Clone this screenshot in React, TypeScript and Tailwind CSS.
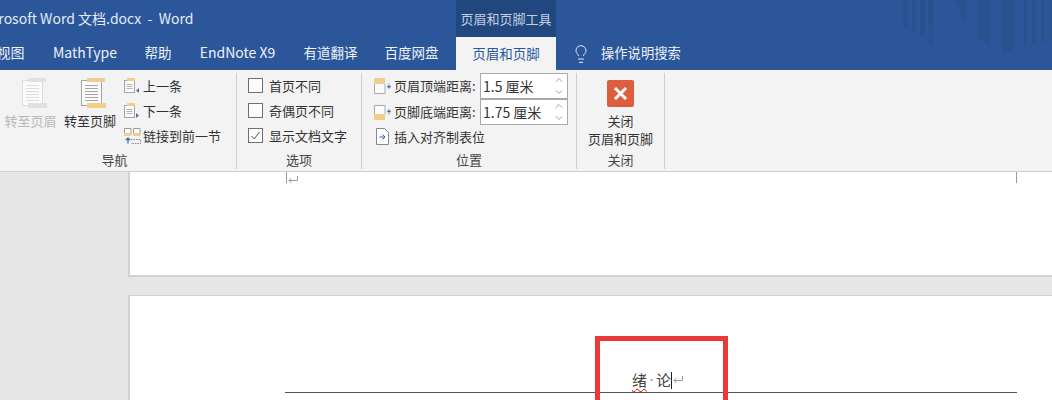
import { Lightbulb, ChevronUp, ChevronDown } from "lucide-react";

const font = "font-['Noto_Sans_CJK_SC','Noto_Sans',sans-serif]";

const tabs = [
  { label: "MathType", width: "w-[92px]", size: "text-[14px]" },
  { label: "帮助", width: "w-[54px]", size: "text-[13.500px]" },
  { label: "EndNote X9", width: "w-[105px]", size: "text-[14px]" },
  { label: "有道翻译", width: "w-[81px]", size: "text-[13.500px]" },
  { label: "百度网盘", width: "w-[81px]", size: "text-[13.500px]" },
];

function PageIcon({ faded }: { faded?: boolean }) {
  const line = faded ? "#dcdcdc" : "#a5a5a5";
  const accent = faded ? "#e0e0e0" : "#f0cf8c";
  return (
    <svg width="26" height="31" viewBox="0 0 26 31" className="shrink-0">
      <rect x="0.500" y="2.500" width="20" height="25" fill="#fbfbfb" stroke={line} />
      {[7, 10, 13, 16, 19, 22].map((y) => (
        <path key={y} d={`M4 ${y + 0.5}h13`} stroke={line} />
      ))}
      <path d="M6 0h18v4H6z" fill={accent} />
      <path d="M6 25h19v5H6z" fill={accent} />
    </svg>
  );
}

function SmallPage({ dir }: { dir: "up" | "down" }) {
  return (
    <svg width="16" height="17" viewBox="0 0 16 17" className="shrink-0">
      <rect x="0.500" y="3.500" width="10" height="12" fill="#fbfbfb" stroke="#a5a5a5" />
      <path d="M2.500 7.500h6M2.500 9.500h6M2.500 11.500h6" stroke="#b5b5b5" />
      <path d="M3 1h8v3H3z" fill="#f0cf8c" />
      {dir === "up" ? <path d="M15 11v5l-3-2.500z" fill="#4a74a8" /> : <path d="M12 11v5l3-2.500z" fill="#4a74a8" />}
    </svg>
  );
}

function LinkIcon() {
  return (
    <svg width="17" height="16" viewBox="0 0 17 16" className="shrink-0">
      <path d="M.500 6V.500h6.500V6M9.500 6V.500H16V6" fill="#fbfbfb" stroke="#999" />
      <path d="M0 5h7.500v3H0zM9 5h7.500v3H9z" fill="#f0cf8c" />
      <path d="M7 11.500h9.500v4H7" fill="none" stroke="#888" strokeDasharray="1.500 1" />
      <path d="M4 10v5.500M1.800 12.200 4 10l2.200 2.200" fill="none" stroke="#2f5f9e" strokeWidth="1.200" />
    </svg>
  );
}

function MarginIcon({ bar }: { bar: "top" | "bottom" }) {
  return (
    <svg width="17" height="17" viewBox="0 0 17 17" className="shrink-0">
      {bar === "top" ? (
        <>
          <path d="M0 0h11v6H0z" fill="#f0cf8c" />
          <path d="M.500 6v9.500h10.500V6" fill="#fbfbfb" stroke="#aaa" />
          <path d="M15 5v3M13 8h4l-2 2.500z" fill="#4a74a8" stroke="#4a74a8" strokeWidth="0.500" />
        </>
      ) : (
        <>
          <path d="M.500 10V1.500h10.500V10" fill="#fbfbfb" stroke="#aaa" />
          <path d="M0 10h11v6H0z" fill="#f0cf8c" />
          <path d="M15 11V8M13 8h4l-2-2.500z" fill="#4a74a8" stroke="#4a74a8" strokeWidth="0.500" />
        </>
      )}
    </svg>
  );
}

function ReturnMark() {
  return (
    <svg width="10" height="10" viewBox="0 0 10 10" className="shrink-0">
      <path d="M9.500 1v4.500H1M3.500 3 1 5.500 3.500 8" fill="none" stroke="#999" />
    </svg>
  );
}

function Check({ label, checked }: { label: string; checked?: boolean }) {
  return (
    <div className="flex h-[25px] items-center gap-[6px]">
      <span className="flex h-[15px] w-[15px] items-center justify-center border border-[#6f6f6f] bg-[#fbfbfb]">
        {checked && (
          <svg width="11" height="11" viewBox="0 0 11 11">
            <path d="M1.500 6 4.300 9 9.500 1.800" fill="none" stroke="#555" />
          </svg>
        )}
      </span>
      <span>{label}</span>
    </div>
  );
}

function Spin({ value }: { value: string }) {
  return (
    <div className="flex h-[26px] w-[88px] items-center justify-between border border-[#a9a9a9] bg-white px-[2px] text-[14px] text-[#333]">
      <span>{value}</span>
      <span className="flex flex-col text-[#666]">
        <ChevronUp size={12} strokeWidth={1.200} />
        <ChevronDown size={12} strokeWidth={1.200} />
      </span>
    </div>
  );
}

function Group({ label, className, labelClass = "", children }: { label: string; className: string; labelClass?: string; children: React.ReactNode }) {
  return (
    <div className={`flex h-[96px] shrink-0 flex-col border-r border-[#cfcfcf] ${className}`}>
      <div className="flex-1">{children}</div>
      <div className={`text-center text-[13px] leading-[18px] text-[#444] ${labelClass}`}>{label}</div>
    </div>
  );
}

export default function App() {
  return (
    <div className={`relative h-[400px] w-[1052px] overflow-hidden bg-[#e6e6e6] ${font}`}>
      {/* title bar + tabs */}
      <div className="relative h-[70px] overflow-hidden bg-[#2b579a]">
        <div className="flex h-[37px] items-start">
          <div className="-ml-[24px] w-[480px] pt-[7px] text-[14px] leading-[22px] whitespace-pre text-[#e4ebf5]">
            Microsoft Word 文档.docx  -  Word
          </div>
          <div className="flex h-[37px] w-[100px] items-center justify-center bg-[#21477f] text-[13px] text-[#c3cfe2]">
            页眉和页脚工具
          </div>
        </div>
        <div className="flex h-[33px] items-center text-[#eef2f8]">
          <div className="-ml-[18px] w-[57px] shrink-0 pb-[2px] text-center text-[14px]">视图</div>
          {tabs.map((tab) => (
            <div key={tab.label} className={`${tab.width} ${tab.size} shrink-0 pb-[2px] text-center`}>
              {tab.label}
            </div>
          ))}
          <div className="ml-[4px] flex h-full w-[100px] items-center justify-center bg-[#f3f3f3] pb-[1px] text-[13.500px] text-[#2b579a]">
            页眉和页脚
          </div>
          <Lightbulb size={20} strokeWidth={1.200} className="ml-[15px] text-[#e4ebf5]" />
          <span className="ml-[10px] pb-[1px] text-[13.300px]">操作说明搜索</span>
        </div>
        {/* background art in the title bar */}
        <svg width="150" height="56" viewBox="0 0 150 56" className="absolute top-0 left-[902px]">
          <g fill="#24497f" opacity="0.4">
            <path d="M1 0h5v28H1zM10 0h4v32H10zM18 0h5v36h-5zM26 0h5v44h-4z" />
            <path d="M53 0h11v24z" />
            <path d="M75 0h13v46l-13-8zM100 0h12v50l-12 2zM122 0h3v46h-3zM130 0h4v44h-4zM139 0h4v42h-4zM147 0h3v40h-3z" />
          </g>
        </svg>
      </div>

      {/* ribbon */}
      <div className="flex h-[102px] border-b border-[#cfcfcf] bg-[#f3f3f3] pt-[3px] text-[13px] leading-[18px] text-[#333]">
        <Group label="导航" className="w-[237px]" labelClass="pr-[7px]">
          <div className="flex">
            <div className="flex w-[61px] flex-col items-center pt-[5px] text-[#b8b8b8]">
              <div className="ml-[8px]"><PageIcon faded /></div>
              <span className="mt-[3px] whitespace-nowrap">转至页眉</span>
            </div>
            <div className="flex w-[58px] flex-col items-center pt-[5px]">
              <div className="ml-[8px]"><PageIcon /></div>
              <span className="mt-[3px] whitespace-nowrap">转至页脚</span>
            </div>
            <div className="ml-[5px] flex flex-col">
              <div className="flex h-[25px] items-center gap-[3px]"><SmallPage dir="up" /><span>上一条</span></div>
              <div className="flex h-[25px] items-center gap-[3px]"><SmallPage dir="down" /><span>下一条</span></div>
              <div className="flex h-[25px] items-center gap-[2px]"><LinkIcon /><span className="whitespace-nowrap">链接到前一节</span></div>
            </div>
          </div>
        </Group>
        <Group label="选项" className="w-[125px]">
          <div className="pl-[11px]">
            <Check label="首页不同" />
            <Check label="奇偶页不同" />
            <Check label="显示文档文字" checked />
          </div>
        </Group>
        <Group label="位置" className="w-[215px]">
          <div className="pl-[12px]">
            <div className="flex h-[26px] items-center gap-[3px]">
              <MarginIcon bar="top" />
              <span className="w-[83px] whitespace-nowrap">页眉顶端距离:</span>
              <Spin value="1.5 厘米" />
            </div>
            <div className="flex h-[26px] items-center gap-[3px]">
              <MarginIcon bar="bottom" />
              <span className="w-[83px] whitespace-nowrap">页脚底端距离:</span>
              <Spin value="1.75 厘米" />
            </div>
            <div className="flex h-[23px] items-center gap-[5px] pl-[2px]">
              <svg width="13" height="17" viewBox="0 0 13 17" className="shrink-0">
                <path d="M.500.500h8l4 4v12H.500z" fill="#fff" stroke="#888" />
                <path d="M3.500 9h5M6.500 6.500 9 9l-2.500 2.500" fill="none" stroke="#2f5f9e" />
              </svg>
              <span className="whitespace-nowrap">插入对齐制表位</span>
            </div>
          </div>
        </Group>
        <Group label="关闭" className="w-[88px]">
          <div className="flex flex-col items-center pt-[7px] leading-[18px]">
            <span className="flex h-[27px] w-[27px] items-center justify-center rounded-[2px] bg-[#dd5e3f]">
              <svg width="15" height="15" viewBox="0 0 15 15">
                <path d="M2 2l11 11M13 2 2 13" stroke="#fff" strokeWidth="3" />
              </svg>
            </span>
            <span className="mt-[5px]">关闭</span>
            <span>页眉和页脚</span>
          </div>
        </Group>
      </div>

      {/* document area */}
      <div className="ml-[128px] flex flex-col gap-[18px]">
        <div className="relative h-[105px] border-b-2 border-l-2 border-[#d2d2d2] bg-white">
          <span className="absolute top-0 left-[156px] h-[11px] w-px bg-[#999]" />
          <span className="absolute top-0 left-[886px] h-[11px] w-px bg-[#999]" />
          <span className="absolute top-[3px] left-[158px]"><ReturnMark /></span>
        </div>
        <div className="h-[120px] border-t border-l-2 border-[#d2d2d2] bg-white pt-[72px] pl-[155px]">
          <div className="w-[732px]">
            <div className="ml-[347px] flex h-[24px] items-center text-[15px] leading-[24px] text-[#444]">
              <span className="underline decoration-[#e00000] decoration-wavy decoration-1 underline-offset-2">绪</span>
              <span className="w-[9px] text-center text-[9px] text-[#999]">·</span>
              <span>论</span>
              <span className="h-[17px] w-px bg-[#222]" />
              <span className="ml-[1px]"><ReturnMark /></span>
            </div>
            <div className="h-px bg-[#555]" />
          </div>
        </div>
      </div>

      {/* red annotation box */}
      <div className="absolute top-[336px] left-[595px] h-[80px] w-[133px] border-[5px] border-[#e93a3a]" />
    </div>
  );
}
